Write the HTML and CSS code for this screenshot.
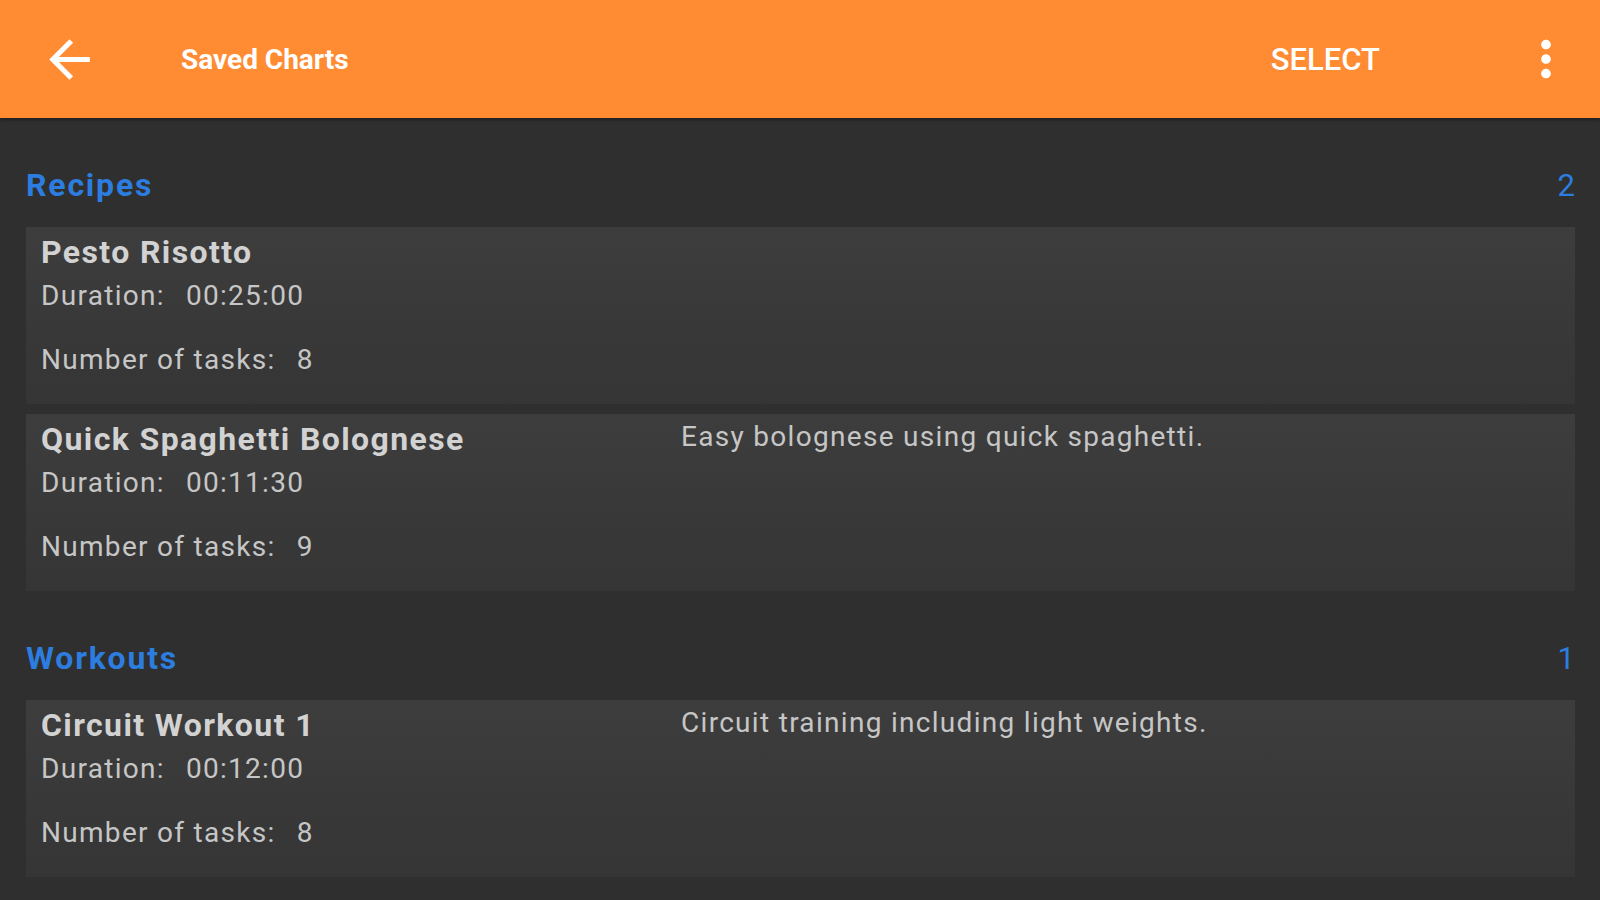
FILE: index.html
```html
<!DOCTYPE html>
<html>
<head>
<meta charset="utf-8">
<link rel="stylesheet" href="styles.css">
</head>
<body>
<header class="appbar">
  <svg class="icon back" viewBox="0 0 24 24"><path d="M20 11H7.83l5.59-5.59L12 4l-8 8 8 8 1.41-1.41L7.83 13H20v-2z"/></svg>
  <div class="title">Saved Charts</div>
  <div class="spacer"></div>
  <div class="action">SELECT</div>
  <svg class="icon more" viewBox="0 0 24 24"><path d="M12 8c1.1 0 2-.9 2-2s-.9-2-2-2-2 .9-2 2 .9 2 2 2zm0 2c-1.1 0-2 .9-2 2s.9 2 2 2 2-.9 2-2-.9-2-2-2zm0 6c-1.1 0-2 .9-2 2s.9 2 2 2 2-.9 2-2-.9-2-2-2z"/></svg>
</header>
<main class="content">
  <section class="group">
    <div class="group-head"><span class="group-name">Recipes</span><span class="group-count">2</span></div>
    <div class="cards">
      <div class="card">
        <div class="card-main">
          <div class="card-title">Pesto Risotto</div>
          <div class="card-line"><span class="label">Duration:</span><span>00:25:00</span></div>
          <div class="card-line tasks"><span class="label">Number of tasks:</span><span>8</span></div>
        </div>
        <div class="card-desc"></div>
      </div>
      <div class="card">
        <div class="card-main">
          <div class="card-title">Quick Spaghetti Bolognese</div>
          <div class="card-line"><span class="label">Duration:</span><span>00:11:30</span></div>
          <div class="card-line tasks"><span class="label">Number of tasks:</span><span>9</span></div>
        </div>
        <div class="card-desc">Easy bolognese using quick spaghetti.</div>
      </div>
    </div>
  </section>
  <section class="group">
    <div class="group-head"><span class="group-name">Workouts</span><span class="group-count">1</span></div>
    <div class="cards">
      <div class="card">
        <div class="card-main">
          <div class="card-title">Circuit Workout 1</div>
          <div class="card-line"><span class="label">Duration:</span><span>00:12:00</span></div>
          <div class="card-line tasks"><span class="label">Number of tasks:</span><span>8</span></div>
        </div>
        <div class="card-desc">Circuit training including light weights.</div>
      </div>
    </div>
  </section>
</main>
</body>
</html>
```
FILE: styles.css
```css
html, body {
  margin: 0;
  padding: 0;
  height: 100%;
  overflow: hidden;
}
body {
  background: #2f2f2f;
  font-family: Roboto, "Liberation Sans", sans-serif;
  color: #cfcfcf;
}
.appbar {
  height: 118px;
  background: #ff8b32;
  display: flex;
  align-items: center;
  padding: 0 25px 0 39px;
  box-shadow: 0 2px 3px rgba(0,0,0,0.35);
  position: relative;
  z-index: 1;
}
.icon {
  fill: #ffffff;
  flex: none;
}
.back {
  width: 61px;
  height: 61px;
}
.title {
  margin-left: 81px;
  font-size: 28px;
  font-weight: 700;
  color: #fff;
}
.spacer {
  flex: 1;
}
.action {
  font-size: 31px;
  font-weight: 500;
  color: #fff;
  margin-right: 137px;
}
.more {
  width: 58px;
  height: 58px;
}
.content {
  padding: 0 25px 0 26px;
}
.group-head {
  height: 109px;
  display: flex;
  justify-content: space-between;
  align-items: center;
  padding-top: 25px;
  box-sizing: border-box;
  color: #2c7ddf;
}
.group-name {
  font-size: 32px;
  font-weight: 700;
  letter-spacing: 1.8px;
}
.group-count {
  font-size: 31px;
  font-weight: 400;
  letter-spacing: 1px;
  margin-right: -1px;
}
.cards {
  display: flex;
  flex-direction: column;
  gap: 10px;
}
.card {
  height: 177px;
  box-sizing: border-box;
  background: linear-gradient(#3d3d3d, #353535);
  display: flex;
  padding: 5px 15px 0 15px;
}
.card-main {
  width: 640px;
  flex: none;
}
.card-title {
  font-size: 32px;
  font-weight: 700;
  line-height: 40px;
  letter-spacing: 1.4px;
  color: #d2d2d2;
}
.card-line {
  font-size: 28px;
  line-height: 40px;
  margin-top: 4px;
  letter-spacing: 1.3px;
  color: #c6c6c6;
}
.card-line.tasks {
  margin-top: 24px;
}
.label {
  margin-right: 21px;
}
.card-desc {
  font-size: 28px;
  line-height: 36px;
  letter-spacing: 1.3px;
  color: #c6c6c6;
}
```
